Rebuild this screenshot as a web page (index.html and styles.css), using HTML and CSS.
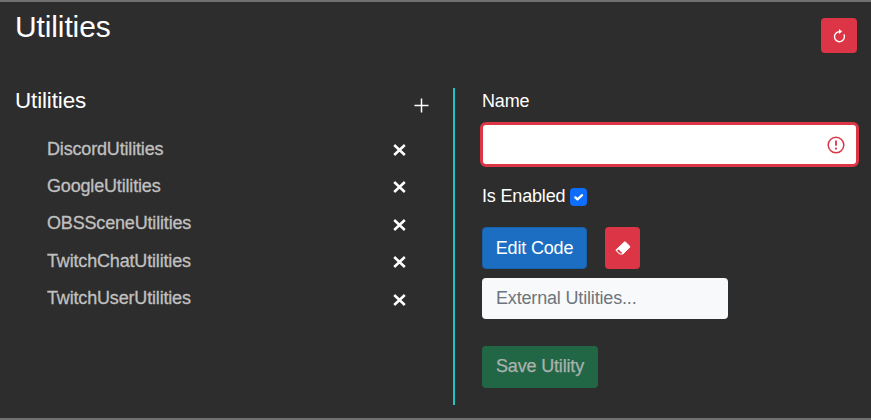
FILE: index.html
```html
<!DOCTYPE html>
<html lang="en">
<head>
<meta charset="utf-8">
<title>Utilities</title>
<link rel="stylesheet" href="styles.css">
</head>
<body>
<main class="panel">
  <header class="top">
    <h1>Utilities</h1>
    <button class="btn refresh" aria-label="Refresh">
      <svg width="15" height="16" viewBox="0 0 15 16" fill="none" stroke="#fff" stroke-width="1.4"><path d="M7.5 3.7a5 5 0 1 0 4.4 2.7"/><path d="M7 .9v5.2l3.2-2.6z" fill="#fff" stroke="none"/></svg>
    </button>
  </header>
  <div class="columns">
    <section class="list">
      <div class="list-head">
        <h2>Utilities</h2>
        <svg class="plus" width="15" height="15" viewBox="0 0 15 15"><path d="M7.5 .5v14M.5 7.5h14" stroke="#fff" stroke-width="1.5"/></svg>
      </div>
      <ul>
        <li><span>DiscordUtilities</span><svg class="remove" viewBox="0 0 13 12"><path d="M1.2 1l10.6 10M11.8 1L1.2 11"/></svg></li>
        <li><span>GoogleUtilities</span><svg class="remove" viewBox="0 0 13 12"><path d="M1.2 1l10.6 10M11.8 1L1.2 11"/></svg></li>
        <li><span>OBSSceneUtilities</span><svg class="remove" viewBox="0 0 13 12"><path d="M1.2 1l10.6 10M11.8 1L1.2 11"/></svg></li>
        <li><span>TwitchChatUtilities</span><svg class="remove" viewBox="0 0 13 12"><path d="M1.2 1l10.6 10M11.8 1L1.2 11"/></svg></li>
        <li><span>TwitchUserUtilities</span><svg class="remove" viewBox="0 0 13 12"><path d="M1.2 1l10.6 10M11.8 1L1.2 11"/></svg></li>
      </ul>
    </section>
    <section class="form">
      <div class="label">Name</div>
      <div class="field">
        <svg width="18" height="18" viewBox="0 0 18 18" fill="none" stroke="#dc3545"><circle cx="9" cy="9" r="7.8" stroke-width="1.5"/><path d="M9 4.6v5.2" stroke-width="1.8"/><circle cx="9" cy="12.6" r="1.1" fill="#dc3545" stroke="none"/></svg>
      </div>
      <div class="enabled">
        <span>Is Enabled</span>
        <span class="check"><svg width="17" height="18" viewBox="0 0 20 20" fill="none" stroke="#fff" stroke-linecap="round" stroke-linejoin="round" stroke-width="2.6"><path d="m6.2 10.4 2.6 2.4 5.4-5"/></svg></span>
      </div>
      <div class="actions">
        <button class="btn edit">Edit Code</button>
        <button class="btn erase" aria-label="Clear">
          <svg width="16" height="14" viewBox="0 0 16 14"><path d="M9.4 1h1l4.3 4.2v1L8 13H4.6L1.2 9.6V8.8z" fill="#fff" stroke="#fff" stroke-linejoin="round"/><path d="M3.6 8.4l3.8 3.8-.3.2H5L2 9.6z" fill="#dc3545"/></svg>
        </button>
      </div>
      <div class="external">External Utilities...</div>
      <button class="btn save" disabled>Save Utility</button>
    </section>
  </div>
</main>
</body>
</html>
```

FILE: styles.css
```css
* { box-sizing: border-box; }
body {
  margin: 0;
  background: #2d2d2d;
  color: #fff;
  font: 18px/27px "Liberation Sans", Arial, sans-serif;
  letter-spacing: -.17px;
}
.panel {
  height: 420px;
  border-top: 2px solid #707070;
  border-bottom: 2px solid #707070;
  padding: 0 13px 0 15px;
}
h1, h2 { margin: 0; font-weight: 400; letter-spacing: -.12px; }
h1 { font-size: 30px; line-height: 36px; padding-top: 7px; }
h2 { font-size: 22.4px; line-height: 25px; }
.top { height: 86px; display: flex; justify-content: space-between; align-items: flex-start; }
.btn {
  display: flex;
  align-items: center;
  justify-content: center;
  border: 0;
  border-radius: 4px;
  padding: 0;
  height: 42px;
  color: #fff;
  font: inherit;
  letter-spacing: inherit;
}
.refresh { width: 36px; height: 35px; margin: 16px 1px 0 0; background: #dc3545; }
.columns { display: flex; height: 317px; }
.list { flex: none; width: 438px; }
.list-head { display: flex; justify-content: space-between; height: 27px; padding-right: 24px; }
.plus { margin-top: 10px; }
ul { list-style: none; margin: 20px 0 0; padding: 0 47px 0 32px; }
li {
  height: 37.4px;
  display: flex;
  justify-content: space-between;
  align-items: flex-start;
  color: #c0c0c0;
  -webkit-text-stroke: .3px #c0c0c0;
}
li span { padding-top: .6px; }
.remove { width: 13px; height: 12px; margin-top: 9px; fill: none; stroke: #fff; stroke-width: 2.5; }
.form { flex: 1; border-left: 2px solid #20c4c4; padding-left: 27px; }
.label { height: 34px; }
.field {
  display: flex;
  align-items: center;
  justify-content: flex-end;
  width: 379px;
  height: 45px;
  margin-left: -2px;
  padding-right: 11px;
  border: 3px solid #dc3545;
  border-radius: 6px;
  background: #fff;
}
.enabled { display: flex; align-items: center; gap: 4.5px; height: 27px; margin-top: 16px; }
.check { display: flex; width: 17px; height: 18px; border-radius: 4px; background: #0d6efd; }
.actions { display: flex; gap: 18px; margin-top: 17px; }
.edit { width: 105px; background: #1b6ec2; border: 1px solid #1861ac; }
.erase { width: 35px; background: #dc3545; }
.external {
  width: 246px;
  height: 41px;
  margin-top: 9px;
  padding: 7px 14px;
  border-radius: 4px;
  background: #f8f9fa;
  color: #6c757d;
}
.save { width: 116px; margin-top: 27px; padding-bottom: 2px; background: #226745; color: #abb1ae; -webkit-text-stroke: .25px #abb1ae; }
```
